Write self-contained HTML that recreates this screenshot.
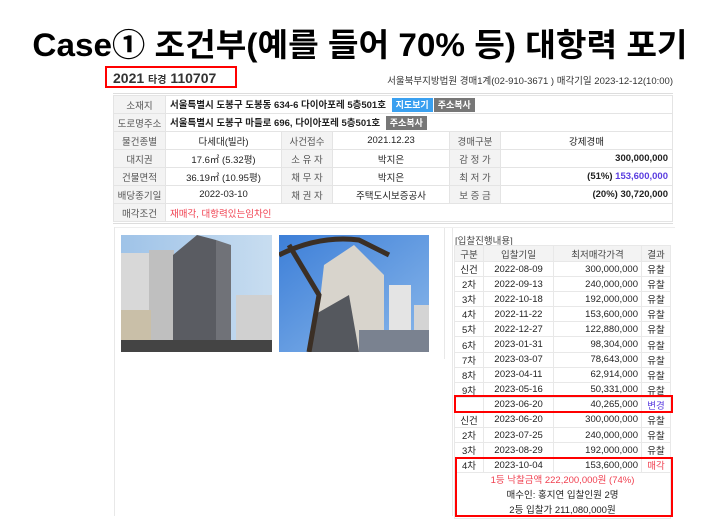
<!DOCTYPE html>
<html><head><meta charset="utf-8"><style>
*{margin:0;padding:0;box-sizing:border-box}
body{width:720px;height:524px;background:#fff;position:relative;overflow:hidden;font-family:"Liberation Sans","Noto Sans CJK KR",sans-serif;color:#222}
.a{position:absolute}
h1{position:absolute;left:0;top:20px;width:720px;text-align:center;font-size:32px;font-weight:bold;letter-spacing:0;color:#000;font-family:"Liberation Sans","Noto Sans CJK KR",sans-serif;transform:scaleX(1.04);white-space:nowrap}
table{border-collapse:collapse;font-size:9.5px}
.info{table-layout:fixed}
.info td{border:1px solid #e4e4e4;height:18px;padding:0 4px;text-align:center;white-space:nowrap;overflow:hidden}
.info td.l{background:#f3f3f3;color:#555;padding:0}
.bt{display:inline-block;color:#fff;font-size:9px;padding:1px 4px;line-height:12px;margin-left:3px;font-weight:bold}
.bid td{border:1px solid #e8e8e8;height:15.1px;padding:0 3px;text-align:center;font-size:9.5px;white-space:nowrap}
.bid tr.h td{background:#f3f3f3;color:#444;height:16px}
.bid td.r{text-align:right}
.red{border:2px solid #f00}
</style></head><body>
<h1>Case① 조건부(예를 들어 70% 등) 대항력 포기</h1>
<div class="a red" style="left:105px;top:66px;width:132px;height:22px"></div>
<div class="a" style="left:113px;top:70px;font-size:14px;font-weight:bold;color:#333">2021 <span style="font-size:10px">타경</span> 110707</div>
<div class="a" style="left:380px;top:73px;width:293px;text-align:right;font-size:9.5px;color:#333;white-space:nowrap">서울북부지방법원 경매1계(02-910-3671 ) 매각기일 2023-12-12(10:00)</div>
<div class="a" style="left:113px;top:93px;width:560px;border-top:1px solid #ddd"></div>
<table class="info a" style="left:113px;top:95px;width:560px">
<colgroup><col style="width:52px"><col style="width:116px"><col style="width:51px"><col style="width:117px"><col style="width:51px"><col></colgroup>
<tr><td class="l">소재지</td><td colspan="5" style="text-align:left;font-weight:bold">서울특별시 도봉구 도봉동 634-6 다이아포레 5층501호 <span class="bt" style="background:#3aa0f0">지도보기</span><span class="bt" style="background:#777;margin-left:1px">주소복사</span></td></tr>
<tr><td class="l">도로명주소</td><td colspan="5" style="text-align:left;font-weight:bold">서울특별시 도봉구 마들로 696, 다이아포레 5층501호 <span class="bt" style="background:#777">주소복사</span></td></tr>
<tr><td class="l">물건종별</td><td>다세대(빌라)</td><td class="l">사건접수</td><td>2021.12.23</td><td class="l">경매구분</td><td>강제경매</td></tr>
<tr><td class="l">대지권</td><td>17.6㎡ (5.32평)</td><td class="l">소 유 자</td><td>박지은</td><td class="l">감 정 가</td><td style="text-align:right;font-weight:bold">300,000,000</td></tr>
<tr><td class="l">건물면적</td><td>36.19㎡ (10.95평)</td><td class="l">채 무 자</td><td>박지은</td><td class="l">최 저 가</td><td style="text-align:right;font-weight:bold">(51%) <span style="color:#5a3de0">153,600,000</span></td></tr>
<tr><td class="l">배당종기일</td><td>2022-03-10</td><td class="l">채 권 자</td><td>주택도시보증공사</td><td class="l">보 증 금</td><td style="text-align:right;font-weight:bold">(20%) 30,720,000</td></tr>
<tr><td class="l">매각조건</td><td colspan="5" style="text-align:left;color:#f04050">재매각, 대항력있는임차인</td></tr>
</table>
<div class="a" style="left:113px;top:223px;width:560px;border-top:1px solid #ddd"></div>
<div class="a" style="left:114px;top:227px;width:1px;height:289px;background:#e8e8e8"></div>
<div class="a" style="left:444px;top:227px;width:1px;height:132px;background:#e8e8e8"></div>
<div class="a" style="left:452px;top:227px;width:1px;height:289px;background:#e8e8e8"></div>
<div class="a" style="left:115px;top:227px;width:560px;border-top:1px solid #eee"></div>
<svg class="a" style="left:121px;top:235px" width="151" height="117">
<defs><linearGradient id="s1" x1="0" y1="0" x2="1" y2="0"><stop offset="0" stop-color="#9fc3e8"/><stop offset="1" stop-color="#c8ddf0"/></linearGradient></defs>
<rect width="151" height="117" fill="url(#s1)"/>
<rect x="0" y="18" width="50" height="99" fill="#d8d8d8"/>
<rect x="28" y="15" width="25" height="102" fill="#bfbfbf"/>
<polygon points="52,20 76,0 95,5 95,117 52,117" fill="#5a5c62"/>
<polygon points="95,5 110,10 110,117 95,117" fill="#707278"/>
<rect x="115" y="60" width="36" height="57" fill="#d0d0d0"/>
<rect x="0" y="75" width="30" height="42" fill="#c9bfa8"/>
<rect x="0" y="105" width="151" height="12" fill="#444"/>
</svg>
<svg class="a" style="left:279px;top:235px" width="150" height="117">
<defs><linearGradient id="s2" x1="0" y1="0" x2="1" y2="1"><stop offset="0" stop-color="#3d7fd8"/><stop offset="1" stop-color="#8bb8ea"/></linearGradient></defs>
<rect width="150" height="117" fill="url(#s2)"/>
<polygon points="45,30 75,10 105,40 105,117 35,117" fill="#d8d4cc"/>
<polygon points="35,80 70,60 80,117 30,117" fill="#55585e"/>
<rect x="110" y="50" width="22" height="67" fill="#e4e4e4"/>
<rect x="135" y="70" width="15" height="47" fill="#d4d4d4"/>
<path d="M0,20 Q40,0 80,5 L110,20 M10,10 L40,60 L30,117" stroke="#3b2f25" stroke-width="5" fill="none"/>
<rect x="80" y="95" width="70" height="22" fill="#7a8290"/>
</svg>
<div class="a" style="left:455px;top:233px;font-size:9.5px;color:#444">[입찰진행내용]</div>
<table class="bid a" style="left:454px;top:245px;width:217px">
<tr class="h"><td style="width:29px">구분</td><td style="width:70px">입찰기일</td><td style="width:88px">최저매각가격</td><td>결과</td></tr>
<tr><td>신건</td><td>2022-08-09</td><td class="r">300,000,000</td><td>유찰</td></tr>
<tr><td>2차</td><td>2022-09-13</td><td class="r">240,000,000</td><td>유찰</td></tr>
<tr><td>3차</td><td>2022-10-18</td><td class="r">192,000,000</td><td>유찰</td></tr>
<tr><td>4차</td><td>2022-11-22</td><td class="r">153,600,000</td><td>유찰</td></tr>
<tr><td>5차</td><td>2022-12-27</td><td class="r">122,880,000</td><td>유찰</td></tr>
<tr><td>6차</td><td>2023-01-31</td><td class="r">98,304,000</td><td>유찰</td></tr>
<tr><td>7차</td><td>2023-03-07</td><td class="r">78,643,000</td><td>유찰</td></tr>
<tr><td>8차</td><td>2023-04-11</td><td class="r">62,914,000</td><td>유찰</td></tr>
<tr><td>9차</td><td>2023-05-16</td><td class="r">50,331,000</td><td>유찰</td></tr>
<tr><td></td><td>2023-06-20</td><td class="r">40,265,000</td><td style="color:#5a3de0">변경</td></tr>
<tr><td>신건</td><td>2023-06-20</td><td class="r">300,000,000</td><td>유찰</td></tr>
<tr><td>2차</td><td>2023-07-25</td><td class="r">240,000,000</td><td>유찰</td></tr>
<tr><td>3차</td><td>2023-08-29</td><td class="r">192,000,000</td><td>유찰</td></tr>
<tr><td>4차</td><td>2023-10-04</td><td class="r">153,600,000</td><td style="color:#f04050">매각</td></tr>
<tr><td colspan="4" style="line-height:15px;padding:0"><span style="color:#f04050">1등 낙찰금액 222,200,000원 (74%)</span><br>매수인: 홍지연 입찰인원 2명<br>2등 입찰가 211,080,000원</td></tr>
</table>
<div class="a red" style="left:454px;top:395px;width:219px;height:18px"></div>
<div class="a red" style="left:455px;top:457px;width:218px;height:60px"></div>
</body></html>
